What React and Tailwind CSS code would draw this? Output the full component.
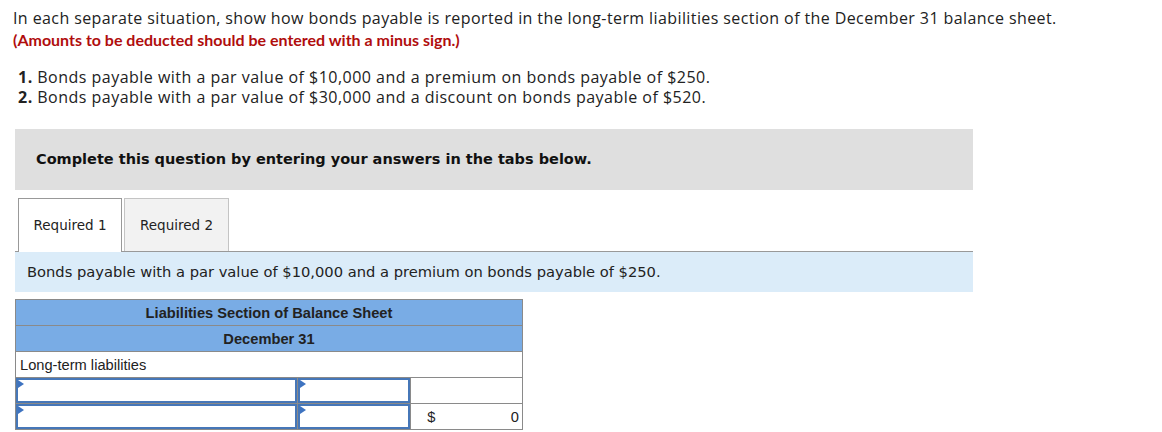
import React from 'react';

function InputCell({ className = '' }) {
  return (
    <td className={`relative border border-[#8a8a8a] p-0 h-[26px] ${className}`}>
      <div className="h-full w-full border-2 border-[#4677b8] bg-white" />
      <span className="absolute left-[2px] top-[2px] h-0 w-0 border-y-[4px] border-l-[6px] border-y-transparent border-l-[#3e73c0]" />
    </td>
  );
}

export default function App() {
  return (
    <div className="min-h-[432px] bg-white pt-[7px] text-[#222]">
      <div className="pl-[13px] font-['Open_Sans',sans-serif] text-[16px]">
        <p className="leading-[22px] tracking-[0.4px]">
          In each separate situation, show how bonds payable is reported in the long-term liabilities section of the December 31 balance sheet.
        </p>
        <p className="font-['Lato',sans-serif] font-bold text-[#b00d0d] leading-[22px]">
          (Amounts to be deducted should be entered with a minus sign.)
        </p>
        <ol className="mt-[16px] pl-[5px] leading-[20px] tracking-[0.48px]">
          <li><span className="font-bold">1.</span> Bonds payable with a par value of $10,000 and a premium on bonds payable of $250.</li>
          <li><span className="font-bold">2.</span> Bonds payable with a par value of $30,000 and a discount on bonds payable of $520.</li>
        </ol>
      </div>

      <div className="ml-[15px] mt-[22px] w-[958px]">
        <div className="flex h-[61px] items-center bg-[#dfdfdf] pl-[21px] font-['DejaVu_Sans',sans-serif] text-[14.5px] font-bold text-[#111]">
          Complete this question by entering your answers in the tabs below.
        </div>

        <div className="mt-[8px] flex items-end gap-[2px] border-b border-[#999] pl-[3px] font-['DejaVu_Sans',sans-serif] text-[13.5px] text-[#222]">
          <div className="-mb-px flex h-[54px] w-[104px] items-center justify-center border border-b-0 border-[#999] bg-white">
            Required 1
          </div>
          <div className="flex h-[53px] w-[105px] items-center justify-center border border-b-0 border-[#c4c4c4] bg-[#f2f2f2]">
            Required 2
          </div>
        </div>

        <div className="flex h-[40px] items-center bg-[#dbecf9] pl-[12px] font-['DejaVu_Sans',sans-serif] text-[14.7px] text-[#222]">
          Bonds payable with a par value of $10,000 and a premium on bonds payable of $250.
        </div>

        <table className="mt-[7px] w-[508px] border-collapse font-['Liberation_Sans',Arial,sans-serif] text-[14.667px] text-[#222]">
          <colgroup>
            <col className="w-[283px]" />
            <col className="w-[113px]" />
            <col className="w-[112px]" />
          </colgroup>
          <tbody>
            <tr className="h-[26px] bg-[#79ace5]">
              <td colSpan={3} className="border border-[#8a8a8a] text-center font-bold">
                Liabilities Section of Balance Sheet
              </td>
            </tr>
            <tr className="h-[26px] bg-[#79ace5]">
              <td colSpan={3} className="border border-[#8a8a8a] text-center font-bold">
                December 31
              </td>
            </tr>
            <tr className="h-[26px]">
              <td colSpan={3} className="border border-[#8a8a8a] px-[4px]">
                Long-term liabilities
              </td>
            </tr>
            <tr className="h-[26px]">
              <InputCell />
              <InputCell />
              <td className="border border-[#8a8a8a]" />
            </tr>
            <tr className="h-[26px]">
              <InputCell />
              <InputCell />
              <td className="border border-[#8a8a8a] pl-[16px] pr-[3px]">
                <div className="flex justify-between">
                  <span>$</span>
                  <span>0</span>
                </div>
              </td>
            </tr>
          </tbody>
        </table>
      </div>
    </div>
  );
}
